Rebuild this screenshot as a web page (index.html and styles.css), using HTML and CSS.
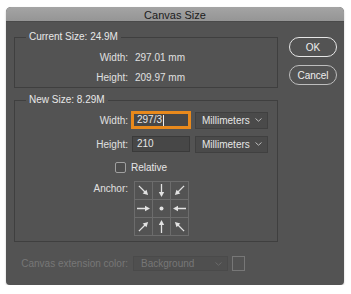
FILE: index.html
```html
<!DOCTYPE html>
<html>
<head>
<meta charset="utf-8">
<link rel="stylesheet" href="styles.css">
</head>
<body>
<svg width="0" height="0" class="defs">
  <defs>
    <g id="arr">
      <line x1="2" y1="8.5" x2="11" y2="8.5" stroke="#e2e2e2" stroke-width="1.3"/>
      <polygon points="10,5.8 15,8.5 10,11.2" fill="#e2e2e2"/>
    </g>
  </defs>
</svg>
<div class="dialog">
  <div class="titlebar">Canvas Size</div>
  <div class="body">
    <div class="main">
      <fieldset class="group current">
        <legend>Current Size: 24.9M</legend>
        <div class="kv"><span class="lab">Width:</span><span class="val">297.01 mm</span></div>
        <div class="kv"><span class="lab">Height:</span><span class="val">209.97 mm</span></div>
      </fieldset>
      <fieldset class="group newsize">
        <legend>New Size: 8.29M</legend>
        <div class="frow">
          <span class="lab">Width:</span>
          <div class="input focus">297/3<span class="caret"></span></div>
          <div class="select">Millimeters<svg class="chev" width="7" height="4" viewBox="0 0 7 4"><polyline points="0.5,0.5 3.5,3.2 6.5,0.5" fill="none" stroke="#bdbdbd" stroke-width="1"/></svg></div>
        </div>
        <div class="frow">
          <span class="lab">Height:</span>
          <div class="input">210</div>
          <div class="select">Millimeters<svg class="chev" width="7" height="4" viewBox="0 0 7 4"><polyline points="0.5,0.5 3.5,3.2 6.5,0.5" fill="none" stroke="#bdbdbd" stroke-width="1"/></svg></div>
        </div>
        <div class="crow">
          <span class="lab"><span class="check"></span></span>
          <span class="ctext">Relative</span>
        </div>
        <div class="arow">
          <span class="lab">Anchor:</span>
          <div class="anchor">
            <div class="cell"><svg width="17" height="17" viewBox="0 0 17 17"><use href="#arr" transform="rotate(45 8.5 8.5)"/></svg></div>
            <div class="cell"><svg width="17" height="17" viewBox="0 0 17 17"><use href="#arr" transform="rotate(90 8.5 8.5)"/></svg></div>
            <div class="cell"><svg width="17" height="17" viewBox="0 0 17 17"><use href="#arr" transform="rotate(135 8.5 8.5)"/></svg></div>
            <div class="cell"><svg width="17" height="17" viewBox="0 0 17 17"><use href="#arr"/></svg></div>
            <div class="cell"><svg width="17" height="17" viewBox="0 0 17 17"><circle cx="8.5" cy="8.5" r="2" fill="#e2e2e2"/></svg></div>
            <div class="cell"><svg width="17" height="17" viewBox="0 0 17 17"><use href="#arr" transform="rotate(180 8.5 8.5)"/></svg></div>
            <div class="cell"><svg width="17" height="17" viewBox="0 0 17 17"><use href="#arr" transform="rotate(-45 8.5 8.5)"/></svg></div>
            <div class="cell"><svg width="17" height="17" viewBox="0 0 17 17"><use href="#arr" transform="rotate(-90 8.5 8.5)"/></svg></div>
            <div class="cell"><svg width="17" height="17" viewBox="0 0 17 17"><use href="#arr" transform="rotate(-135 8.5 8.5)"/></svg></div>
          </div>
        </div>
      </fieldset>
      <div class="ext">
        <span class="extlab">Canvas extension color:</span>
        <div class="select dis">Background<svg class="chev" width="7" height="4" viewBox="0 0 7 4"><polyline points="0.5,0.5 3.5,3.2 6.5,0.5" fill="none" stroke="#6a6a6a" stroke-width="1"/></svg></div>
        <div class="swatch"></div>
      </div>
    </div>
    <div class="buttons">
      <div class="btn ok">OK</div>
      <div class="btn">Cancel</div>
    </div>
  </div>
</div>
</body>
</html>
```
FILE: styles.css
```css
html, body {
  margin: 0;
  padding: 0;
  background: #ffffff;
}
.defs {
  position: absolute;
  width: 0;
  height: 0;
}
.dialog {
  margin: 7px 0 0 6px;
  width: 338px;
  height: 278px;
  background: #535353;
  border-radius: 5px 5px 4px 4px;
  overflow: hidden;
  font-family: "Liberation Sans", Arial, sans-serif;
  font-size: 10px;
  color: #e4e4e4;
  box-shadow: 0 1px 2px rgba(0,0,0,0.25);
}
.titlebar {
  height: 15px;
  background: linear-gradient(#a4a4a4, #959595);
  color: #1c1c1c;
  text-align: center;
  line-height: 16px;
  font-size: 11px;
  border-bottom: 1px solid #4a4a4a;
  box-sizing: border-box;
}
.body {
  display: flex;
  padding: 8px 7px 0 8px;
}
.main {
  width: 264px;
}
.group {
  margin: 0;
  padding: 0;
  border: 1px solid #3f3f3f;
  min-inline-size: 0;
}
.group legend {
  margin-left: 11px;
  padding: 0 3px;
  line-height: 14px;
  color: #e8e8e8;
}
.current {
  padding-top: 3px;
}
.kv {
  display: flex;
  align-items: center;
  height: 20px;
}
.lab {
  width: 113px;
  flex: none;
  text-align: right;
  color: #e0e0e0;
}
.val {
  margin-left: 7px;
  color: #e0e0e0;
}
.newsize {
  margin-top: 5px;
  padding: 4px 0 5px;
}
.frow {
  display: flex;
  align-items: center;
  height: 18px;
}
.frow + .frow {
  margin-top: 6px;
}
.input {
  margin-left: 4px;
  width: 58px;
  height: 16px;
  box-sizing: border-box;
  background: #474747;
  border: 1px solid #3a3a3a;
  padding-left: 4px;
  line-height: 14px;
  color: #e6e6e6;
  display: flex;
  align-items: center;
}
.input.focus {
  border: 2px solid #e8891c;
  box-shadow: 0 0 0 1px #e8891c;
  padding-left: 3px;
}
.caret {
  display: inline-block;
  width: 1px;
  height: 11px;
  background: #f0f0f0;
  margin-left: 1px;
}
.select {
  margin-left: 5px;
  width: 73px;
  height: 17px;
  box-sizing: border-box;
  background: #4a4a4a;
  border: 1px solid #404040;
  padding: 0 5px 0 6px;
  display: flex;
  align-items: center;
  justify-content: space-between;
  color: #e6e6e6;
}
.chev {
  flex: none;
}
.crow {
  display: flex;
  align-items: center;
  height: 14px;
  margin-top: 7px;
}
.crow .lab {
  display: flex;
  justify-content: flex-end;
}
.check {
  width: 11px;
  height: 11px;
  box-sizing: border-box;
  border: 1px solid #a0a0a0;
  border-radius: 2px;
  background: #4d4d4d;
  margin-right: 2px;
}
.ctext {
  margin-left: 3px;
  color: #e6e6e6;
}
.arow {
  display: flex;
  align-items: flex-start;
  margin-top: 7px;
}
.arow .lab {
  margin-top: 2px;
}
.anchor {
  margin-left: 6px;
  display: grid;
  grid-template-columns: repeat(3, 17px);
  grid-template-rows: repeat(3, 17px);
  gap: 1px;
  padding: 1px;
  background: #6c6c6c;
}
.cell {
  background: #535353;
  display: flex;
}
.ext {
  display: flex;
  align-items: center;
  margin-top: 14px;
  height: 15px;
}
.extlab {
  width: 114px;
  flex: none;
  text-align: right;
  color: #777777;
}
.select.dis {
  margin-left: 5px;
  width: 95px;
  height: 15px;
  background: #4f4f4f;
  border-color: #4a4a4a;
  color: #777777;
  padding-left: 7px;
}
.swatch {
  margin-left: 4px;
  width: 13px;
  height: 15px;
  box-sizing: border-box;
  border: 1px solid #777777;
  background: #535353;
}
.buttons {
  margin-left: 11px;
  margin-top: 7px;
  display: flex;
  flex-direction: column;
  gap: 8px;
}
.btn {
  width: 48px;
  height: 20px;
  box-sizing: border-box;
  border: 1px solid #bdbdbd;
  border-radius: 10px;
  display: flex;
  align-items: center;
  justify-content: center;
  color: #eeeeee;
  font-size: 10px;
}
.btn.ok {
  border-color: #e6e6e6;
}
```
